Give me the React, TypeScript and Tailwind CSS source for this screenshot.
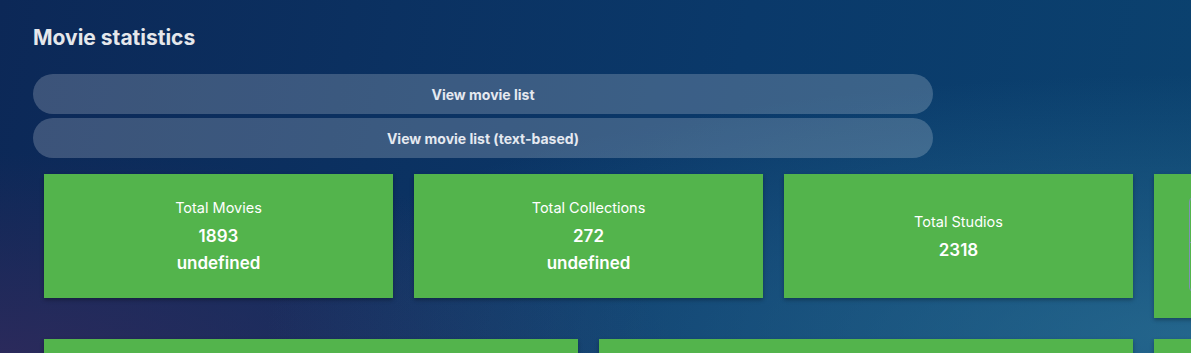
import React from "react";

const font = { fontFamily: "Inter, 'Noto Sans', 'Liberation Sans', sans-serif" };

function StatCard({ label, value, extra }: { label: string; value: string; extra?: string }) {
  return (
    <div className="w-[349px] h-[124px] shrink-0 bg-[#53b44c] shadow-[0_2px_4px_rgba(0,0,0,0.3)] pt-[3px] flex flex-col items-center justify-center text-white">
      <div className="text-[14.5px] leading-5">{label}</div>
      <div className="text-[17px] leading-[27px] font-semibold mt-[5px]">{value}</div>
      {extra && <div className="text-[17px] leading-[27px] font-semibold">{extra}</div>}
    </div>
  );
}

export default function App() {
  return (
    <div
      style={font}
      className="w-full h-[353px] overflow-hidden bg-[radial-gradient(ellipse_at_100%_95%,rgba(52,125,160,0.6),transparent_55%),radial-gradient(ellipse_at_0%_100%,rgba(48,42,92,0.85),transparent_40%),linear-gradient(100deg,#0c2857,#0a396a_60%,#0b426f)]"
    >
      <div className="pt-[24px] pl-[33px]">
        <h1 className="text-[21px] leading-7 font-bold text-[#e5e7eb]">Movie statistics</h1>
        <div className="mt-[22px] flex flex-col gap-1 w-[900px]">
          <button className="h-10 w-full rounded-full bg-white/20 text-[14px] leading-5 pt-[2px] font-bold text-[#e5e9f0]">
            View movie list
          </button>
          <button className="h-10 w-full rounded-full bg-white/20 text-[14px] leading-5 pt-[2px] font-bold text-[#e5e9f0]">
            View movie list (text-based)
          </button>
        </div>
      </div>
      <div className="mt-4 pl-[44px] flex flex-col gap-[21px]">
        <div className="flex items-start gap-[21px]">
          <StatCard label="Total Movies" value="1893" extra="undefined" />
          <StatCard label="Total Collections" value="272" extra="undefined" />
          <StatCard label="Total Studios" value="2318" />
          <div className="w-[349px] h-[144px] shrink-0 bg-[#53b44c] shadow-[0_2px_4px_rgba(0,0,0,0.3)] pt-[22px] pl-[35px]">
            <div className="w-[280px] h-[97px] rounded-md border border-[#7f90b6] flex flex-col">
              <div className="h-[46px] border-b border-[#7f90b6]" />
            </div>
          </div>
        </div>
        <div className="flex items-start gap-[21px]">
          <div className="w-[534px] h-[124px] shrink-0 bg-[#53b44c] shadow-[0_2px_4px_rgba(0,0,0,0.3)]" />
          <div className="w-[534px] h-[124px] shrink-0 bg-[#53b44c] shadow-[0_2px_4px_rgba(0,0,0,0.3)]" />
          <div className="w-[349px] h-[124px] shrink-0 bg-[#53b44c] shadow-[0_2px_4px_rgba(0,0,0,0.3)]" />
        </div>
      </div>
    </div>
  );
}
